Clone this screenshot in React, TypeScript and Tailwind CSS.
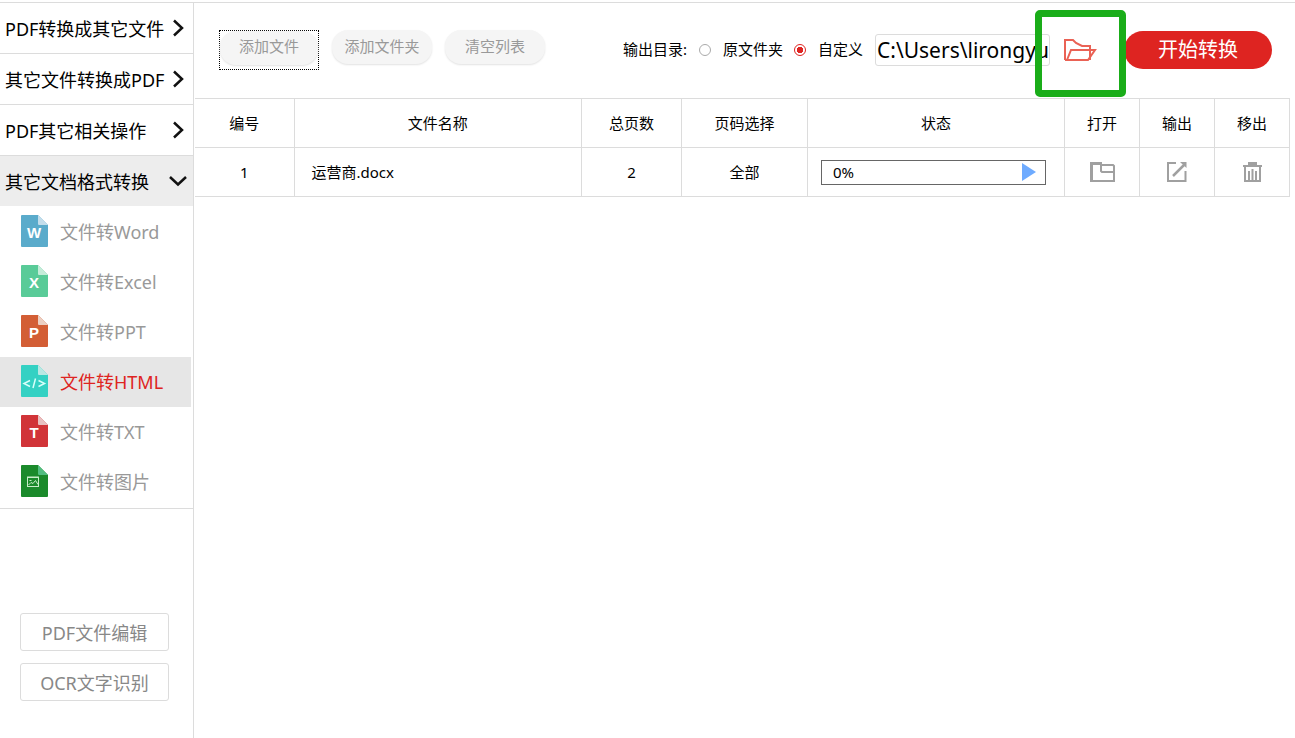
import type { ReactNode } from "react";

const menus = ["PDF转换成其它文件", "其它文件转换成PDF", "PDF其它相关操作"];

const Glyph = ({ children }: { children: string }) => (
  <text
    x="13"
    y="23"
    textAnchor="middle"
    fill="#fff"
    fontSize="15"
    fontWeight="700"
    fontFamily="Liberation Sans, sans-serif"
  >
    {children}
  </text>
);

const formats: {
  name: string;
  color: string;
  fold: string;
  active?: boolean;
  mark: ReactNode;
}[] = [
  { name: "文件转Word", color: "#5aabcb", fold: "#c3ddeb", mark: <Glyph>W</Glyph> },
  { name: "文件转Excel", color: "#59cb98", fold: "#c5ecd9", mark: <Glyph>X</Glyph> },
  { name: "文件转PPT", color: "#d35e35", fold: "#ecd0c3", mark: <Glyph>P</Glyph> },
  {
    name: "文件转HTML",
    color: "#34d1c3",
    fold: "#b9e8e3",
    active: true,
    mark: (
      <path
        d="M9 15.500l-6 3 6 3M17.500 15.500l6 3-6 3M14.500 13.500l-2.500 9.500"
        fill="none"
        stroke="#d8fffa"
        strokeWidth="1.500"
      />
    ),
  },
  { name: "文件转TXT", color: "#d13438", fold: "#e8c1c1", mark: <Glyph>T</Glyph> },
  {
    name: "文件转图片",
    color: "#1b8a2b",
    fold: "#52bd80",
    mark: (
      <g fill="none" stroke="#c9ecc9" strokeWidth="1">
        <rect x="6.500" y="12.500" width="11" height="9" />
        <path d="M6 12h12" />
        <path d="M7.500 20l2.500-2.500 2 1 2.500-3 2.500 4" />
        <path d="M8.500 15.500h2" />
      </g>
    ),
  },
];

const FileIcon = ({ color, fold, children }: { color: string; fold: string; children: ReactNode }) => (
  <svg width="27" height="32" viewBox="0 0 27 32">
    <path d="M1 0h16l10 10v21a1 1 0 0 1-1 1H1a1 1 0 0 1-1-1V1a1 1 0 0 1 1-1z" fill={color} />
    <path d="M17 0l10 10h-9a1 1 0 0 1-1-1z" fill={fold} />
    {children}
  </svg>
);

const th = "border border-[#dcdcdc] font-normal";
const td = "border border-[#dcdcdc]";
const pill =
  "h-[34px] w-[100px] rounded-2xl bg-[#f5f5f5] pb-px text-[15px] text-[#999] shadow-[0_1px_2px_#e2e2e2]";
const sideButton = "h-[38px] rounded-[3px] border border-[#dcdcdc] pt-[2px] text-[18px] text-[#888]";
const iconButton = "flex w-full items-center justify-center";

export default function App() {
  return (
    <div className="flex min-h-screen flex-col bg-white pt-[2px] font-['Noto_Sans','Noto_Sans_CJK_SC',sans-serif] text-black">
      <div className="flex flex-1 border-t border-[#dcdcdc]">
        {/* Sidebar */}
        <aside className="w-[194px] shrink-0 border-r border-[#dcdcdc]">
          {menus.map((menu) => (
            <button
              key={menu}
              className="flex h-[51px] w-full items-center justify-between border-b border-[#dcdcdc] pr-2 pl-[5px] text-[18px] whitespace-nowrap"
            >
              <span className="pt-[2px]">{menu}</span>
              <svg width="13" height="20" viewBox="0 0 13 20" fill="none" stroke="#111" strokeWidth="2.500" className="shrink-0">
                <path d="M2 2.500l8 7.500-8 7.500" />
              </svg>
            </button>
          ))}
          <button className="flex h-[50px] w-full items-center justify-between bg-[#ededed] pr-[5px] pl-[5px] text-[18px] whitespace-nowrap">
            <span className="pt-[2px]">其它文档格式转换</span>
            <svg width="20" height="14" viewBox="0 0 20 14" fill="none" stroke="#111" strokeWidth="2.500">
              <path d="M2 3l8 7.500 8-7.500" />
            </svg>
          </button>
          <nav className="border-b border-[#dcdcdc] py-px pr-[2px]">
            {formats.map((f) => (
              <a
                key={f.name}
                href="#"
                className={`flex h-[50px] items-start gap-3 pt-2 pl-[21px] text-[18px] leading-[34px] ${
                  f.active ? "bg-[#e6e6e6] text-[#de2421]" : "text-[#999]"
                }`}
              >
                <FileIcon color={f.color} fold={f.fold}>
                  {f.mark}
                </FileIcon>
                {f.name}
              </a>
            ))}
          </nav>
          <div className="mt-[104px] flex flex-col gap-3 pr-6 pl-5">
            <button className={sideButton}>PDF文件编辑</button>
            <button className={sideButton}>OCR文字识别</button>
          </div>
        </aside>

        <main className="min-w-0 flex-1 pr-[5px] pl-px">
          {/* Toolbar */}
          <div className="flex h-[95px] items-center justify-between pr-[18px] pb-[2px] pl-6">
            <div className="flex gap-[13px]">
              <div className="h-10 border border-dotted border-black">
                <button className="block h-[34px] w-[98px] rounded-2xl bg-[#f5f5f5] pb-[3px] text-[15px] text-[#999] shadow-[0_1px_2px_#e2e2e2]">
                  添加文件
                </button>
              </div>
              <button className={pill}>添加文件夹</button>
              <button className={pill}>清空列表</button>
            </div>

            <div className="flex items-center text-[15px]">
              <span>输出目录:</span>
              <label className="ml-3 flex items-center gap-3">
                <input
                  type="radio"
                  name="output"
                  className="size-3 appearance-none rounded-full border border-[#aaa]"
                />
                原文件夹
              </label>
              <label className="ml-[11px] flex items-center gap-3">
                <input
                  type="radio"
                  name="output"
                  defaultChecked
                  className="size-3 appearance-none rounded-full border border-[#de2421] bg-[radial-gradient(#de2421_0_3px,white_3px)]"
                />
                自定义
              </label>
              <input
                aria-label="输出目录"
                defaultValue="C:\Users\lirongyu"
                className="ml-3 h-8 w-[175px] rounded-[3px] border border-[#dcdcdc] pl-px text-[21px]"
              />
              <div className="relative ml-[13px] flex w-[38px] items-center">
                <button aria-label="选择文件夹">
                  <svg
                    width="34"
                    height="24"
                    viewBox="0 0 34 24"
                    fill="none"
                    stroke="#ea6255"
                    strokeWidth="2"
                    className="block"
                  >
                    <path d="M2 22V2h8l3 3 6 3h8v14" />
                    <path d="M2 22h23l7-10H8L4 22" />
                  </svg>
                </button>
                <div className="pointer-events-none absolute -top-[28px] -left-[28px] h-[87px] w-[91px] rounded-[5px] border-[7px] border-[#1aad19]" />
              </div>
              <button className="ml-[23px] h-[38px] w-[148px] rounded-full bg-[#de2421] text-[20px] text-white">
                开始转换
              </button>
            </div>
          </div>

          {/* File list */}
          <table className="w-full table-fixed border-collapse text-[15px]">
            <colgroup>
              <col className="w-[99px]" />
              <col />
              <col className="w-[100px]" />
              <col className="w-[126px]" />
              <col className="w-[257px]" />
              <col className="w-[75px]" />
              <col className="w-[75px]" />
              <col className="w-[75px]" />
            </colgroup>
            <thead>
              <tr className="h-[49px]">
                <th className={`${th} border-l-0`}>编号</th>
                <th className={th}>文件名称</th>
                <th className={th}>总页数</th>
                <th className={th}>页码选择</th>
                <th className={th}>状态</th>
                <th className={th}>打开</th>
                <th className={th}>输出</th>
                <th className={th}>移出</th>
              </tr>
            </thead>
            <tbody>
              <tr className="h-[49px] text-center">
                <td className={`${td} border-l-0`}>1</td>
                <td className={`${td} pl-[17px] text-left`}>运营商.docx</td>
                <td className={td}>2</td>
                <td className={td}>全部</td>
                <td className={`${td} pr-[18px] pl-[13px]`}>
                  <div className="flex h-[25px] items-center justify-between border border-[#666] pr-[9px] pl-[11px]">
                    0%
                    <button aria-label="开始">
                      <svg width="14" height="18" viewBox="0 0 14 18" fill="#6eabff" className="block">
                        <path d="M0 0l14 9-14 9z" />
                      </svg>
                    </button>
                  </div>
                </td>
                <td className={td}>
                  <button aria-label="打开" className={iconButton}>
                    <svg width="25" height="20" viewBox="0 0 25 20" fill="none" stroke="#a0a0a0">
                      <path d="M12 1.500H1.500V20" strokeWidth="3" />
                      <path d="M1 19h23V4l-1-1H11v6l1 1h12" strokeWidth="2" />
                    </svg>
                  </button>
                </td>
                <td className={td}>
                  <button aria-label="输出" className={iconButton}>
                    <svg width="20" height="20" viewBox="0 0 20 20" fill="none" stroke="#a0a0a0" strokeWidth="2">
                      <path d="M9 1H1v18h17.500V9" />
                      <path d="M6 14L17 3" strokeWidth="2.500" />
                      <path d="M13 0h6.500v6z" fill="#a0a0a0" stroke="none" />
                    </svg>
                  </button>
                </td>
                <td className={td}>
                  <button aria-label="移出" className={iconButton}>
                    <svg width="19" height="20" viewBox="0 0 19 20" fill="none" stroke="#a0a0a0" strokeWidth="2">
                      <path d="M5 0h9v3H5z" fill="#a0a0a0" stroke="none" />
                      <path d="M0 4h19M2 4v15h15V4M6 18V9M9.500 18V7M13 18V9" />
                    </svg>
                  </button>
                </td>
              </tr>
            </tbody>
          </table>
        </main>
      </div>
    </div>
  );
}
